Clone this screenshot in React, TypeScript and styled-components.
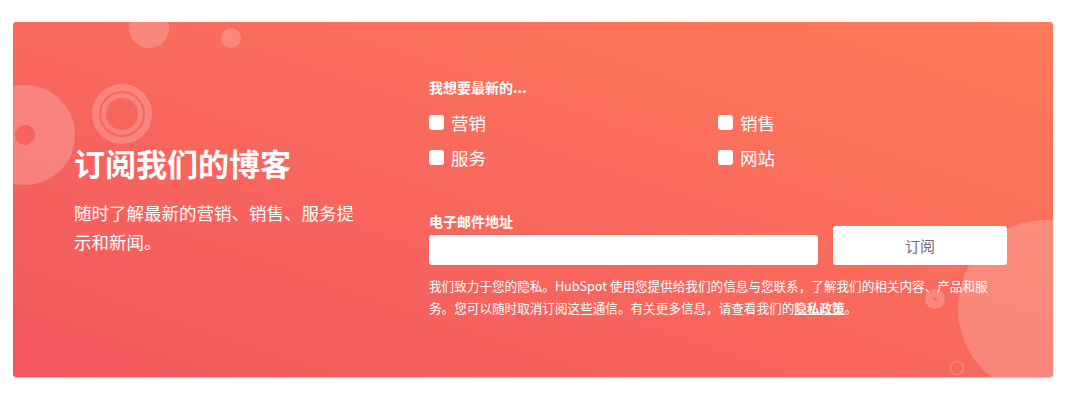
import styled, { createGlobalStyle } from "styled-components";

const GlobalStyle = createGlobalStyle`
  html, body {
    margin: 0;
    padding: 0;
    background: #ffffff;
  }
  body {
    font-family: "Noto Sans CJK SC", "Noto Sans", sans-serif;
    color: #ffffff;
  }
`;

const topics = ["营销", "销售", "服务", "网站"];

export default function App() {
  return (
    <>
      <GlobalStyle />
      <Page>
        <Card>
          <Decorations
            width="1040"
            height="355"
            viewBox="0 0 1040 355"
            aria-hidden="true"
          >
            <Dot cx="136" cy="6" r="20" />
            <Dot cx="218" cy="16" r="10" />
            <Ring cx="12" cy="113" r="30" $width={40} />
            <Ring cx="109" cy="92" r="26.5" $width={7} />
            <Ring cx="109" cy="92" r="18.5" $width={5} />
            <Dot cx="1033" cy="286" r="88" />
            <Ring cx="922" cy="277" r="6" $width={8} />
            <Ring cx="944" cy="346" r="6.5" $width={1.6} />
          </Decorations>

          <Intro>
            <Title>订阅我们的博客</Title>
            <Lead>随时了解最新的营销、销售、服务提示和新闻。</Lead>
          </Intro>

          <Form onSubmit={(e) => e.preventDefault()}>
            <FieldLabel>我想要最新的...</FieldLabel>
            <TopicGrid>
              {topics.map((topic) => (
                <TopicOption key={topic}>
                  <Checkbox type="checkbox" />
                  <span>{topic}</span>
                </TopicOption>
              ))}
            </TopicGrid>

            <EmailRow>
              <EmailField>
                <FieldLabel>电子邮件地址</FieldLabel>
                <EmailInput type="email" />
              </EmailField>
              <SubscribeButton type="submit">订阅</SubscribeButton>
            </EmailRow>

            <Privacy>
              我们致力于您的隐私。HubSpot
              使用您提供给我们的信息与您联系，了解我们的相关内容、产品和服务。您可以随时取消订阅这些通信。有关更多信息，请查看我们的
              <PolicyLink href="#">隐私政策</PolicyLink>。
            </Privacy>
          </Form>
        </Card>
      </Page>
    </>
  );
}

const Page = styled.div`
  padding: 22px 27px 26px 13px;
`;

const Card = styled.section`
  position: relative;
  overflow: hidden;
  height: 355px;
  box-sizing: border-box;
  padding: 0 46px 0 61px;
  border-radius: 3px;
  background: linear-gradient(to top right, #f2575f 0%, #f8675d 45%, #ff7b59 100%);
  box-shadow: 0 1px 1px rgba(255, 140, 140, 0.6);
  display: grid;
  grid-template-columns: 355px 1fr;
  align-items: center;
`;

const Decorations = styled.svg`
  position: absolute;
  left: 0;
  top: 0;
  pointer-events: none;
`;

const Dot = styled.circle`
  fill: rgba(255, 255, 255, 0.2);
`;

const Ring = styled.circle<{ $width: number }>`
  fill: none;
  stroke: rgba(255, 255, 255, 0.2);
  stroke-width: ${(p) => p.$width};
`;

const Intro = styled.div`
  position: relative;
  display: flex;
  flex-direction: column;
  gap: 15px;
`;

const Title = styled.h2`
  margin: 0;
  font-size: 31px;
  line-height: 40px;
  font-weight: 700;
`;

const Lead = styled.p`
  margin: 0;
  max-width: 290px;
  font-size: 17.5px;
  line-height: 29px;
  font-weight: 400;
`;

const Form = styled.form`
  position: relative;
  display: flex;
  flex-direction: column;
  padding-bottom: 4px;
`;

const FieldLabel = styled.label`
  display: block;
  font-size: 14px;
  line-height: 20px;
  font-weight: 700;
`;

const TopicGrid = styled.div`
  display: grid;
  grid-template-columns: 1fr 1fr;
  row-gap: 9px;
  margin-top: 13px;
  margin-bottom: 40px;
`;

const TopicOption = styled.label`
  display: flex;
  align-items: center;
  gap: 7px;
  height: 26px;
  font-size: 17.5px;
  line-height: 26px;
  cursor: pointer;
`;

const Checkbox = styled.input`
  appearance: none;
  margin: 0;
  width: 15px;
  height: 15px;
  border-radius: 3px;
  background: #ffffff;
  flex-shrink: 0;
`;

const EmailRow = styled.div`
  display: flex;
  align-items: flex-end;
  gap: 15px;
`;

const EmailField = styled.div`
  flex: 0 0 389px;
  display: flex;
  flex-direction: column;
  gap: 4px;
`;

const EmailInput = styled.input`
  box-sizing: border-box;
  width: 100%;
  height: 30px;
  border: none;
  border-radius: 3px;
  background: #ffffff;
  outline: none;
  padding: 0 10px;
  font: inherit;
`;

const SubscribeButton = styled.button`
  flex: 1;
  height: 39px;
  border: none;
  border-radius: 3px;
  background: #ffffff;
  color: #706d84;
  font-family: inherit;
  font-size: 15px;
  cursor: pointer;
`;

const Privacy = styled.p`
  margin: 10px 0 0;
  font-size: 12.6px;
  line-height: 22px;
`;

const PolicyLink = styled.a`
  color: #ffffff;
  font-weight: 700;
  text-decoration: underline;
`;
